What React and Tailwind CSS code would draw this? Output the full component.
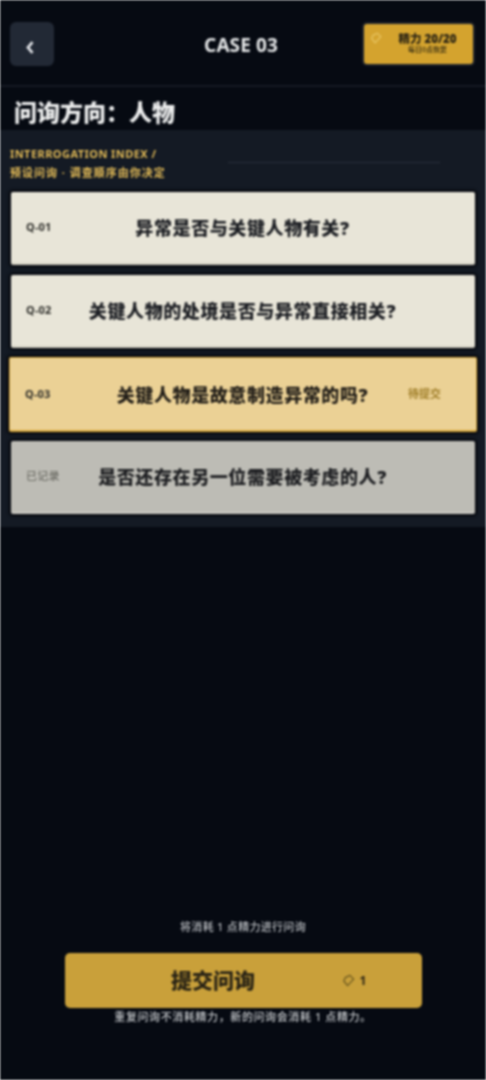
import React from "react";

function Gem({ className }) {
  return (
    <svg viewBox="0 0 16 16" className={className} fill="none" stroke="currentColor" strokeWidth="1.4" strokeLinejoin="round">
      <path d="M9.5 2.5 13.5 6.5 7 13.5 3 8.5 4.5 5Z" />
    </svg>
  );
}

function Card({ tag, text, right, kind }) {
  const styles = {
    normal: "mx-[11px] h-[73px] bg-[#e8e5d8] border-b-2 border-[#d2cfc2] text-[#1c1e23]",
    selected: "mx-[9px] -my-px h-[75px] bg-[#ebd195] border border-[#d5a63c] border-b-2 text-[#221e18]",
    done: "mx-[11px] h-[73px] bg-[#bdbcb5] border-b-2 border-[#c9c8c2] text-[#1e1f22]",
  }[kind];
  return (
    <div className={`relative flex items-center justify-center rounded-[2px] shadow-[0_0_3px_2px_#06080d] ${styles}`}>
      <span className={`absolute left-[15px] text-[11px] tracking-[0.2px] ${kind === "selected" ? "top-[28px]" : "top-[27px]"} ${kind === "done" ? "text-[#5c5c55] font-normal" : "font-bold text-[#2f2f2b]"}`}>{tag}</span>
      <span className="text-[18px] font-black leading-none tracking-[0.6px] -ml-[1px] mt-[1px]">{text}</span>
      {right && <span className="absolute right-[35px] text-[11px] font-semibold text-[#a07f2a]">{right}</span>}
    </div>
  );
}

export default function App() {
  return (
    <div className="h-[1080px] w-[486px] flex flex-col bg-[#060a12] text-white overflow-hidden blur-[0.9px] font-['Noto_Sans','Noto_Sans_CJK_SC',sans-serif]">
      <header className="h-[87px] shrink-0 flex items-center justify-between pt-[3px] pl-[10px] pr-[13px] border-b-2 border-[#151a23]">
        <button className="w-[44px] h-[44px] rounded-[6px] bg-[#222935] flex items-center justify-center text-[#e5e7eb]">
          <svg viewBox="0 0 12 18" className="w-[10px] h-[15px] mt-[6px] -ml-[4px]" fill="none" stroke="currentColor" strokeWidth="3.2">
            <path d="M9 2.5 3.5 9 9 15.5" />
          </svg>
        </button>
        <div className="text-[19px] font-bold text-[#e3e5e6] ml-[59px] -mr-[5px] mt-[3px] tracking-[0.1px]">CASE 03</div>
        <div className="relative w-[109px] h-[40px] rounded-[3px] bg-[#d4a32e] ring-2 ring-[#1d222b] flex flex-col items-center justify-center pl-[18px] text-[#2b2414]">
          <Gem className="absolute left-[5px] top-[7px] w-[14px] h-[14px] text-[#e9c765]" />
          <div className="text-[11.5px] font-black leading-[14px]">精力 20/20</div>
          <div className="text-[7px] leading-[9px] font-semibold text-[#4a3c17] -mt-[1px] mb-[3px]">每日0点恢复</div>
        </div>
      </header>
      <h1 className="h-[43px] shrink-0 pl-[14px] pt-[7px] flex items-center text-[23px] font-black text-[#eceded]">问询方向：人物</h1>
      <section className="shrink-0 h-[397px] bg-[#141a24] pt-[14px]">
        <div className="h-[48px] pl-[10px] relative text-[#e3bb57] text-[11px] font-bold leading-[19px]">
          <div className="tracking-[0.45px]">INTERROGATION INDEX /</div>
          <div className="tracking-[1px]">预设问询 · 调查顺序由你决定</div>
          <div className="absolute left-[228px] w-[212px] top-[18px] h-px bg-[#2a303b]"></div>
        </div>
        <div className="flex flex-col gap-[10px]">
          <Card kind="normal" tag="Q-01" text="异常是否与关键人物有关?" />
          <Card kind="normal" tag="Q-02" text="关键人物的处境是否与异常直接相关?" />
          <Card kind="selected" tag="Q-03" text="关键人物是故意制造异常的吗?" right="待提交" />
          <Card kind="done" tag="已记录" text="是否还存在另一位需要被考虑的人?" />
        </div>
      </section>
      <div className="flex-1"></div>
      <footer className="shrink-0 flex flex-col items-center pb-[55px]">
        <div className="text-[11px] leading-[16px] font-medium text-[#b9bcc0] mb-[18px] tracking-[0.3px]">将消耗 1 点精力进行问询</div>
        <button className="relative w-[357px] h-[55px] rounded-[5px] bg-[#c9a03a] flex items-center justify-center text-[#2a2415] pr-[60px]">
          <span className="text-[21px] font-black">提交问询</span>
          <span className="absolute left-[276px] flex items-center gap-[4px] text-[12px] font-bold">
            <Gem className="w-[15px] h-[15px] text-[#6d5a20]" />1
          </span>
        </button>
        <div className="text-[11px] leading-[16px] font-medium text-[#c4c7ca] mt-[1px] tracking-[0.6px]">重复问询不消耗精力，新的问询会消耗 1 点精力。</div>
      </footer>
    </div>
  );
}
